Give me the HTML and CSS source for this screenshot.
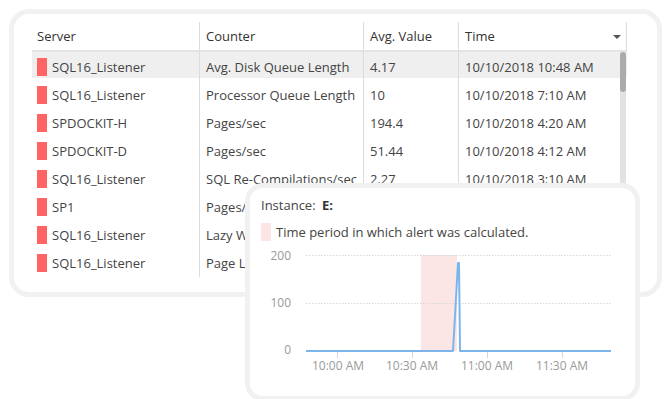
FILE: index.html
```html
<!DOCTYPE html>
<html>
<head>
<meta charset="utf-8">
<link rel="stylesheet" href="styles.css">
</head>
<body>
<div class="page">
  <div class="card">
    <div class="table">
      <div class="grid">
        <div class="hcell first">Server</div>
        <div class="hcell">Counter</div>
        <div class="hcell">Avg. Value</div>
        <div class="hcell last">Time<span class="sort"></span></div>

        <div class="row sel">
          <div class="cell first"><span class="mark"></span>SQL16_Listener</div>
          <div class="cell">Avg. Disk Queue Length</div>
          <div class="cell">4.17</div>
          <div class="cell">10/10/2018 10:48 AM</div>
        </div>
        <div class="row">
          <div class="cell first"><span class="mark"></span>SQL16_Listener</div>
          <div class="cell">Processor Queue Length</div>
          <div class="cell">10</div>
          <div class="cell">10/10/2018 7:10 AM</div>
        </div>
        <div class="row">
          <div class="cell first"><span class="mark"></span>SPDOCKIT-H</div>
          <div class="cell">Pages/sec</div>
          <div class="cell">194.4</div>
          <div class="cell">10/10/2018 4:20 AM</div>
        </div>
        <div class="row">
          <div class="cell first"><span class="mark"></span>SPDOCKIT-D</div>
          <div class="cell">Pages/sec</div>
          <div class="cell">51.44</div>
          <div class="cell">10/10/2018 4:12 AM</div>
        </div>
        <div class="row">
          <div class="cell first"><span class="mark"></span>SQL16_Listener</div>
          <div class="cell">SQL Re-Compilations/sec</div>
          <div class="cell">2.27</div>
          <div class="cell">10/10/2018 3:10 AM</div>
        </div>
        <div class="row">
          <div class="cell first"><span class="mark"></span>SP1</div>
          <div class="cell">Pages/sec</div>
          <div class="cell">1.02</div>
          <div class="cell">10/10/2018 2:40 AM</div>
        </div>
        <div class="row">
          <div class="cell first"><span class="mark"></span>SQL16_Listener</div>
          <div class="cell">Lazy Writes/sec</div>
          <div class="cell">3.5</div>
          <div class="cell">10/10/2018 2:10 AM</div>
        </div>
        <div class="row">
          <div class="cell first"><span class="mark"></span>SQL16_Listener</div>
          <div class="cell">Page Life Expectancy</div>
          <div class="cell">120</div>
          <div class="cell">10/10/2018 1:30 AM</div>
        </div>
        <div class="tail"></div>
      </div>
      <div class="scroll"><div class="thumb"></div></div>
    </div>
  </div>

  <div class="popup">
    <div class="instance">Instance:&nbsp; <b>E:</b></div>
    <div class="legend"><span class="swatch"></span>Time period in which alert was calculated.</div>
    <svg class="chart" width="385" height="140" viewBox="0 0 385 140">
      <g transform="translate(-250,-245)">
        <rect x="421" y="255" width="36" height="96" fill="#fbe5e5"/>
        <line x1="306" y1="255.5" x2="611" y2="255.5" stroke="#d8d8d8" stroke-dasharray="1.5 1.5"/>
        <line x1="306" y1="303.5" x2="611" y2="303.5" stroke="#d8d8d8" stroke-dasharray="1.5 1.5"/>
        <line x1="337.5" y1="351" x2="337.5" y2="358" stroke="#ccd6eb"/>
        <line x1="412.5" y1="351" x2="412.5" y2="358" stroke="#ccd6eb"/>
        <line x1="487.5" y1="351" x2="487.5" y2="358" stroke="#ccd6eb"/>
        <line x1="562.5" y1="351" x2="562.5" y2="358" stroke="#ccd6eb"/>
        <polyline points="306,351 453,351 458,263 459,263 460,351 611,351" fill="none" stroke="#7cb5ec" stroke-width="2" stroke-linejoin="round"/>
        <text x="291" y="259.5" class="ylab">200</text>
        <text x="291" y="306.5" class="ylab">100</text>
        <text x="291" y="353.5" class="ylab">0</text>
        <text x="338" y="369.5" class="xlab">10:00 AM</text>
        <text x="412" y="369.5" class="xlab">10:30 AM</text>
        <text x="487" y="369.5" class="xlab">11:00 AM</text>
        <text x="562" y="369.5" class="xlab">11:30 AM</text>
      </g>
    </svg>
  </div>
</div>
</body>
</html>
```

FILE: styles.css
```css
html, body {
  margin: 0;
  padding: 0;
  background: #ffffff;
}
body {
  font-family: "Open Sans", "Noto Sans", sans-serif;
  font-size: 13px;
  color: #444;
}
.page {
  position: relative;
  width: 668px;
  height: 399px;
  overflow: hidden;
  padding-top: 9px;
  padding-left: 9px;
  box-sizing: border-box;
}
.card {
  width: 625px;
  height: 270px;
  border: 5px solid #f1f1f1;
  border-radius: 20px;
  padding: 8px 0 0 18px;
  box-sizing: content-box;
  display: flex;
}
.table {
  display: flex;
  position: relative;
}
.grid {
  display: grid;
  grid-template-columns: 167px 164px 95px 169px;
  grid-auto-rows: 28px;
  width: 595px;
}
.hcell {
  height: 28px;
  border-bottom: 2px solid #e3e3e3;
  border-left: 1px solid #dcdcdc;
  padding-left: 6px;
  display: flex;
  align-items: center;
  color: #333;
  position: relative;
}
.hcell.first { border-left: none; padding-left: 5px; }
.hcell.last { border-right: 1px solid #dcdcdc; }
.sort {
  position: absolute;
  right: 5px;
  top: 13px;
  width: 0;
  height: 0;
  border-left: 4px solid transparent;
  border-right: 4px solid transparent;
  border-top: 4px solid #555;
}
.row {
  display: contents;
}
.cell {
  display: flex;
  align-items: center;
  padding-left: 6px;
  padding-top: 5px;
  border-left: 1px solid #dcdcdc;
  white-space: nowrap;
  overflow: hidden;
}
.cell.first { border-left: none; padding-left: 5px; }
.row.sel .cell { background: #efefef; }
.mark {
  display: inline-block;
  width: 10px;
  height: 18px;
  background: #ff6363;
  margin-right: 5px;
}
.tail {
  grid-column: 2 / 3;
  height: 3px;
  border-left: 1px solid #dcdcdc;
}
.scroll {
  width: 6px;
  margin-top: 30px;
  height: 245px;
  background: #e2e2e2;
  border-radius: 3px;
  margin-left: -7px;
  position: relative;
}
.thumb {
  width: 6px;
  height: 40px;
  background: #ababab;
  border-radius: 3px;
}
.popup {
  position: absolute;
  left: 245px;
  top: 183px;
  width: 395px;
  height: 218px;
  background: #fff;
  border: 5px solid #f1f1f1;
  border-radius: 18px;
  padding: 8px 0 0 11px;
  box-sizing: border-box;
}
.instance {
  height: 17px;
  display: flex;
  align-items: center;
  color: #444;
}
.instance b { color: #333; margin-left: 3px; }
.legend {
  display: flex;
  align-items: center;
  height: 20px;
  margin-top: 9px;
}
.swatch {
  display: inline-block;
  width: 10px;
  height: 18px;
  background: #fbe5e5;
  margin-right: 5px;
}
.chart {
  display: block;
  margin-left: -11px;
  margin-top: 3px;
}
.ylab {
  font-family: "Open Sans", sans-serif;
  font-size: 12px;
  fill: #999;
  text-anchor: end;
}
.xlab {
  font-family: "Open Sans", sans-serif;
  font-size: 12px;
  fill: #999;
  text-anchor: middle;
}
```
